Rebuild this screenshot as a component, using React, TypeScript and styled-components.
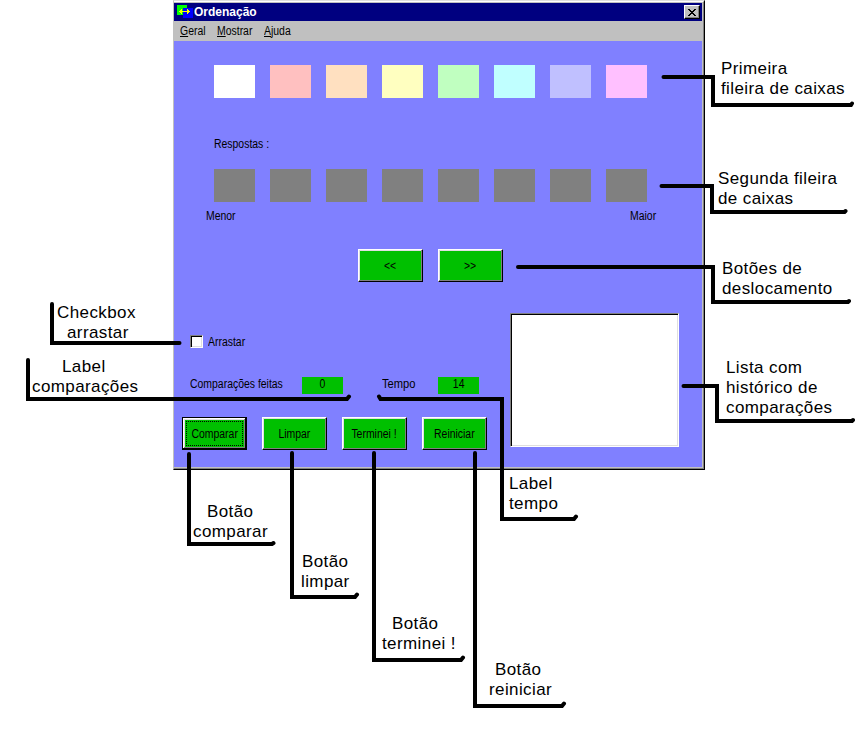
import React from "react";
import styled, { createGlobalStyle } from "styled-components";

const GlobalStyle = createGlobalStyle`
  * { box-sizing: border-box; }
  body { margin: 0; background: #fff; }
`;

const Page = styled.main`
  position: relative;
  width: 857px;
  height: 755px;
  overflow: hidden;
  background: #fff;
  color: #000;
  font-family: "Liberation Sans", Arial, sans-serif;
`;

const Window = styled.section`
  width: 532px;
  height: 470px;
  margin-left: 173px;
  display: flex;
  flex-direction: column;
  background: #8080ff;
  border-left: 1px solid #c0c0c0;
  border-right: 1px solid #000;
  border-bottom: 1px solid #000;
  border-top: 1px solid #dfdfdf;
`;

const Frame = styled.div`
  flex: 1;
  display: flex;
  flex-direction: column;
  border-top: 1px solid #fff;
  border-right: 1px solid #808080;
  border-bottom: 1px solid #808080;
`;

const InnerFrame = styled.div`
  flex: 1;
  display: flex;
  flex-direction: column;
  border: 0 solid #c0c0c0;
  border-width: 1px 1px 1px 0;
`;

const TitleBar = styled.header`
  height: 18px;
  display: flex;
  align-items: center;
  padding: 0 2px 0 3px;
  background: #000080;
  color: #fff;
`;

const TitleIcon = styled.svg`
  flex: none;
  display: block;
`;

const Title = styled.h1`
  flex: 1;
  margin: 0 0 0 1px;
  font-size: 12px;
  line-height: 16px;
  font-weight: 700;
`;

const CloseButton = styled.button`
  width: 16px;
  height: 14px;
  padding: 0;
  display: flex;
  align-items: center;
  justify-content: center;
  background: #c0c0c0;
  border: 1px solid;
  border-color: #fff #000 #000 #fff;
  box-shadow: inset -1px -1px #808080;
`;

const MenuBar = styled.nav`
  height: 20px;
  display: flex;
  padding: 2px 0 0 6px;
  background: #c0c0c0;
`;

const MenuItem = styled.div<{ $width: number }>`
  width: ${(p) => p.$width}px;
`;

const Caption = styled.span<{ $center?: boolean; $scale?: number }>`
  display: block;
  font-size: 12px;
  line-height: 16px;
  white-space: nowrap;
  transform: scaleX(${(p) => p.$scale ?? 0.87});
  transform-origin: ${(p) => (p.$center ? "center" : "left")} center;
  u { text-underline-offset: 1px; }
`;

const Form = styled.div`
  flex: 1;
  padding-top: 24px;
`;

const BoxRow = styled.div`
  display: flex;
  gap: 15px;
  padding-left: 40px;
`;

const Box = styled.div<{ $color: string }>`
  width: 41px;
  height: 33px;
  background: ${(p) => p.$color};
`;

const AnswersHeading = styled.div`
  padding: 38px 0 17px 40px;
`;

const Extremes = styled.div`
  display: flex;
  padding: 6px 0 0 32px;
`;

const Extreme = styled.div`
  width: 424px;
`;

const ShiftButtons = styled.div`
  display: flex;
  gap: 15px;
  padding: 25px 0 31px 184px;
`;

const PushButton = styled.button<{ $selected?: boolean }>`
  width: 65px;
  height: 33px;
  padding: 0;
  display: flex;
  align-items: center;
  justify-content: center;
  background: #00c000;
  color: #000;
  font-family: inherit;
  border: 1px solid;
  border-color: ${(p) => (p.$selected ? "#000" : "#fff #000 #000 #fff")};
  box-shadow: ${(p) =>
    p.$selected
      ? "inset -1px -1px #000, inset 1px 1px #fff, inset -2px -2px #808080, inset 2px 2px #dfdfdf"
      : "inset -1px -1px #808080, inset 1px 1px #dfdfdf"};
`;

const FocusRing = styled.span`
  width: 57px;
  height: 25px;
  display: flex;
  align-items: center;
  justify-content: center;
  border: 1px dotted #000;
`;

const Lower = styled.div`
  display: flex;
`;

const Controls = styled.div`
  width: 336px;
  flex: none;
  padding-top: 22px;
`;

const CheckRow = styled.label`
  height: 13px;
  display: flex;
  align-items: center;
  gap: 5px;
  padding-left: 16px;
`;

const CheckBox = styled.span`
  width: 13px;
  height: 13px;
  background: #fff;
  border: 1px solid;
  border-color: #808080 #fff #fff #808080;
  box-shadow: inset 1px 1px #000, inset -1px -1px #dfdfdf;
`;

const Stats = styled.div`
  display: flex;
  margin-top: 29px;
  padding-left: 16px;
`;

const StatName = styled.div<{ $width: number }>`
  width: ${(p) => p.$width}px;
  flex: none;
  margin-top: -1px;
`;

const StatValue = styled.div`
  width: 41px;
  height: 17px;
  flex: none;
  display: flex;
  justify-content: center;
  background: #00c000;
  ${Caption} { margin-top: -1px; }
  & + ${StatName} { margin-left: 39px; }
`;

const Actions = styled.div`
  display: flex;
  gap: 15px;
  margin-top: 23px;
  padding-left: 8px;
`;

const History = styled.div`
  width: 169px;
  height: 134px;
  background: #fff;
  border: 1px solid;
  border-color: #808080 #fff #fff #808080;
  box-shadow: inset 1px 1px #000, inset -1px -1px #dfdfdf;
`;

/* Callouts lie over the window and the margin around it. */
const Leaders = styled.svg`
  position: absolute;
  inset: 0;
  pointer-events: none;
`;

const Note = styled.div<{ $x: number; $y: number }>`
  position: absolute;
  left: ${(p) => p.$x}px;
  top: ${(p) => p.$y}px;
  font-size: 17px;
  line-height: 20px;
  letter-spacing: 0.4px;
  white-space: nowrap;
`;

const NoteLine = styled.div<{ $indent: number }>`
  padding-left: ${(p) => p.$indent}px;
`;

const colors = ["#ffffff", "#ffc0c0", "#ffe0c0", "#ffffc0", "#c0ffc0", "#c0ffff", "#c0c0ff", "#ffc0ff"];

const leaders = [
  "M663.5 77H713V105H851L852 103.5",
  "M661.5 186H712V212H844.5L845.5 211",
  "M518 267H713V302H848L849 301",
  "M683.5 386H717V421H852L853 420",
  "M52 304V343H179.5",
  "M28 360V399H347L349 396.5",
  "M379 396.5L380.5 399H502V519H574L576 516.5",
  "M189 454V544H272L273.5 543",
  "M292 453V597H355L357 594.5",
  "M374 453V660H461L463 657.5",
  "M475 453V706H562L564 703.5",
];

type NoteData = { x: number; y: number; lines: [string, number][] };

const notes: NoteData[] = [
  { x: 721, y: 59, lines: [["Primeira", 0], ["fileira de caixas", 0]] },
  { x: 718, y: 169, lines: [["Segunda fileira", 0], ["de caixas", 0]] },
  { x: 722, y: 259, lines: [["Botões de", 0], ["deslocamento", 0]] },
  { x: 726, y: 358, lines: [["Lista com", 0], ["histórico de", 0], ["comparações", 0]] },
  { x: 57, y: 303, lines: [["Checkbox", 0], ["arrastar", 10]] },
  { x: 32, y: 357, lines: [["Label", 30], ["comparações", 0]] },
  { x: 193, y: 502, lines: [["Botão", 14], ["comparar", 0]] },
  { x: 301, y: 552, lines: [["Botão", 1], ["limpar", 0]] },
  { x: 382, y: 614, lines: [["Botão", 10], ["terminei !", 0]] },
  { x: 489, y: 660, lines: [["Botão", 6], ["reiniciar", 0]] },
  { x: 509, y: 474, lines: [["Label", 0], ["tempo", 0]] },
];

const AppIcon = () => (
  <TitleIcon width="16" height="16" viewBox="0 0 16 16" shapeRendering="crispEdges">
    <path fill="#00ff00" d="M0 1h10v10H0z" />
    <path fill="#0000ff" d="M6 4h10v10H6z" />
    <path fill="#ffff00" d="M2 7h11v1H2zM3 6h1v3H3zM4 5h1v5H4zM11 6h1v3h-1zM10 5h1v5h-1z" />
  </TitleIcon>
);

const CloseIcon = () => (
  <svg width="8" height="7" viewBox="0 0 8 7" shapeRendering="crispEdges">
    <path d="M0 0h2v1H0zM6 0h2v1H6zM1 1h2v1H1zM5 1h2v1H5zM2 2h4v1H2zM3 3h2v1H3zM2 4h4v1H2zM1 5h2v1H1zM5 5h2v1H5zM0 6h2v1H0zM6 6h2v1H6z" />
  </svg>
);

export default function App() {
  return (
    <Page>
      <GlobalStyle />
      <Window>
        <Frame>
          <InnerFrame>
            <TitleBar>
              <AppIcon />
              <Title>Ordenação</Title>
              <CloseButton aria-label="Fechar">
                <CloseIcon />
              </CloseButton>
            </TitleBar>
            <MenuBar>
              <MenuItem $width={37}><Caption><u>G</u>eral</Caption></MenuItem>
              <MenuItem $width={47}><Caption><u>M</u>ostrar</Caption></MenuItem>
              <MenuItem $width={40}><Caption><u>A</u>juda</Caption></MenuItem>
            </MenuBar>
            <Form>
              <BoxRow>
                {colors.map((c) => <Box key={c} $color={c} />)}
              </BoxRow>
              <AnswersHeading><Caption>Respostas :</Caption></AnswersHeading>
              <BoxRow>
                {colors.map((c) => <Box key={c} $color="#808080" />)}
              </BoxRow>
              <Extremes>
                <Extreme><Caption>Menor</Caption></Extreme>
                <Caption>Maior</Caption>
              </Extremes>
              <ShiftButtons>
                <PushButton><Caption $center>&lt;&lt;</Caption></PushButton>
                <PushButton><Caption $center>&gt;&gt;</Caption></PushButton>
              </ShiftButtons>
              <Lower>
                <Controls>
                  <CheckRow><CheckBox /><Caption>Arrastar</Caption></CheckRow>
                  <Stats>
                    <StatName $width={112}><Caption>Comparações feitas</Caption></StatName>
                    <StatValue><Caption $center>0</Caption></StatValue>
                    <StatName $width={56}><Caption $scale={0.93}>Tempo</Caption></StatName>
                    <StatValue><Caption $center>14</Caption></StatValue>
                  </Stats>
                  <Actions>
                    <PushButton $selected>
                      <FocusRing><Caption $center>Comparar</Caption></FocusRing>
                    </PushButton>
                    <PushButton><Caption $center>Limpar</Caption></PushButton>
                    <PushButton><Caption $center>Terminei !</Caption></PushButton>
                    <PushButton><Caption $center>Reiniciar</Caption></PushButton>
                  </Actions>
                </Controls>
                <History />
              </Lower>
            </Form>
          </InnerFrame>
        </Frame>
      </Window>
      <Leaders width="857" height="755" viewBox="0 0 857 755" fill="none" stroke="#000" strokeWidth="4" strokeLinecap="round">
        {leaders.map((d) => <path key={d} d={d} />)}
      </Leaders>
      {notes.map((n) => (
        <Note key={`${n.x}-${n.y}`} $x={n.x} $y={n.y}>
          {n.lines.map(([text, indent]) => (
            <NoteLine key={text} $indent={indent}>{text}</NoteLine>
          ))}
        </Note>
      ))}
    </Page>
  );
}
